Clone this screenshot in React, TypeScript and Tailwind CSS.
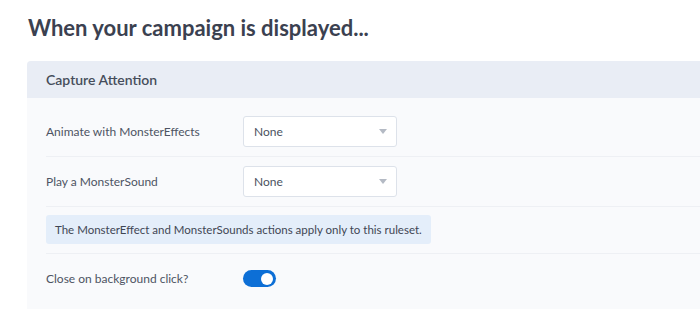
import { ReactNode } from 'react';

function SelectBox() {
  return (
    <div className="flex h-[31px] w-[154px] items-center justify-between rounded-[3px] border border-[#dde2ea] bg-white pl-[10px] pr-[9px] text-[12px] text-[#4a5160]">
      <span>None</span>
      <svg width="8" height="5" viewBox="0 0 8 5">
        <path d="M0 0h8L4 5z" fill="#b4bac4" />
      </svg>
    </div>
  );
}

function Row({
  label,
  children,
  first,
}: {
  label: string;
  children: ReactNode;
  first?: boolean;
}) {
  return (
    <div
      className={`flex items-center py-[9px] ${first ? '' : 'border-t border-[#eef0f4]'}`}
    >
      <div className="w-[197px] shrink-0 text-[12px] text-[#4d5463]">
        {label}
      </div>
      {children}
    </div>
  );
}

export default function App() {
  return (
    <div
      className="h-[309px] w-[700px] overflow-hidden bg-white"
      style={{ fontFamily: 'Lato, "Open Sans", sans-serif' }}
    >
      <h1 className="pl-[28px] pt-[14px] text-[22px] font-bold leading-[28px] text-[#3b4150]">
        When your campaign is displayed...
      </h1>

      <div className="ml-[27px] mt-[19px] w-[720px] rounded-[4px] bg-[#f9fafc]">
        <div className="flex h-[37px] items-center rounded-t-[4px] bg-[#e9edf5] pl-[19px] text-[14px] font-semibold text-[#464d5b]">
          Capture Attention
        </div>

        <div className="pl-[19px] pt-[9px]">
          <Row label="Animate with MonsterEffects" first>
            <SelectBox />
          </Row>
          <Row label="Play a MonsterSound">
            <SelectBox />
          </Row>
          <div className="border-t border-[#eef0f4] pb-[9px] pt-[8px]">
            <div className="flex h-[29px] w-[385px] items-center rounded-[3px] bg-[#e4eefa] pl-[9px] text-[11.5px] text-[#3f4654]">
              The MonsterEffect and MonsterSounds actions apply only to this ruleset.
            </div>
          </div>
          <Row label="Close on background click?">
            <div className="my-[7px] flex h-[17px] w-[33px] items-center justify-end rounded-full bg-[#0d6fd6] pr-[3px]">
              <div className="h-[12px] w-[12px] rounded-full bg-white" />
            </div>
          </Row>
          <div className="h-[20px]" />
        </div>
      </div>
    </div>
  );
}
